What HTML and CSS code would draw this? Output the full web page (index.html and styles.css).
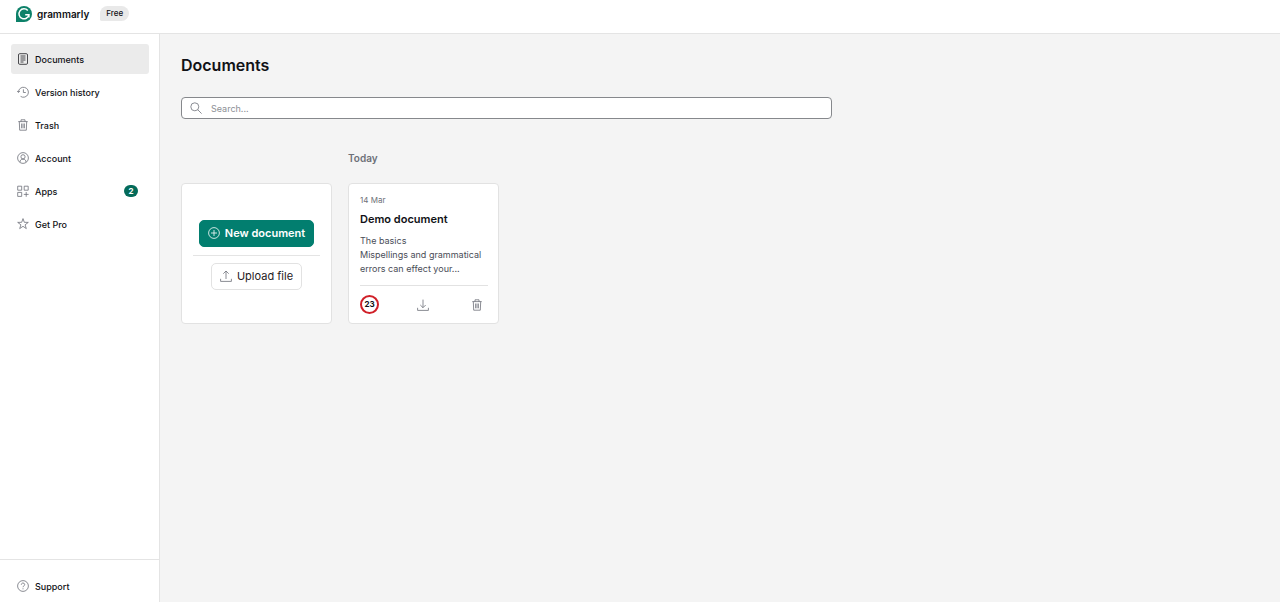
FILE: index.html
```html
<!DOCTYPE html>
<html lang="en">
<head>
  <meta charset="UTF-8" />
  <meta name="viewport" content="width=device-width, initial-scale=1" />
  <title>Documents - Grammarly</title>
  <link rel="stylesheet" href="styles.css">
</head>
<body>

  <header class="topbar">
    <a class="brand" href="#">
      <svg class="logo" viewBox="0 0 16 16">
        <path d="M0 16V8a8 8 0 1 1 8 8z" fill="#0d8169"/>
        <path d="M11.8 4.6A5 5 0 1 0 12.9 8.8H9.2M12.9 8.3v3.2" fill="none" stroke="#fff" stroke-width="1.5"/>
      </svg>
      <span class="brand-name">grammarly</span>
    </a>
    <span class="plan">Free</span>
  </header>

  <div class="layout">
    <aside class="sidebar">
      <nav class="menu">
        <a class="item active" href="#">
          <svg class="icon" viewBox="0 0 12 12"><rect x="1.5" y=".7" width="9" height="10.6" rx="1.2"/><path d="M3.5 3h5M3.5 5h5M3.5 7h5M3.5 9h3"/></svg>
          Documents
        </a>
        <a class="item" href="#">
          <svg class="icon" viewBox="0 0 12 12"><path d="M1.4 6.2A5 5 0 1 1 3.6 10.4M0 4.8l1.4 1.6L3 5M6.4 3.3v3.2h2.4"/></svg>
          Version history
        </a>
        <a class="item" href="#">
          <svg class="icon" viewBox="0 0 12 12"><path d="M1.3 2.6h9.4M4 2.6V.8h4v1.8M2.3 2.6l.4 8.6h6.6l.4-8.6M4.6 4.5v4.8M6 4.5v4.8M7.4 4.5v4.8"/></svg>
          Trash
        </a>
        <a class="item" href="#">
          <svg class="icon" viewBox="0 0 12 12"><circle cx="6" cy="6" r="5.4"/><circle cx="6" cy="4.8" r="2.1"/><path d="M3 10.2c0-2 1-3 3-3s3 1 3 3"/></svg>
          Account
        </a>
        <a class="item" href="#">
          <svg class="icon" viewBox="0 0 12 12"><path d="M.7 1.2h4v4h-4zM7.2 1.2h4v4h-4zM.7 7.4h4v4h-4zM9.2 7v4.8M6.8 9.4h4.8"/></svg>
          Apps
          <span class="count">2</span>
        </a>
        <a class="item" href="#">
          <svg class="icon" viewBox="0 0 12 12"><path d="M6 .6l1.3 3.7 4 .1-3.2 2.4 1.2 3.8L6 8.3l-3.3 2.3 1.2-3.8L.7 4.4l4-.1z"/></svg>
          Get Pro
        </a>
      </nav>
      <div class="sidebar-footer">
        <a class="item" href="#">
          <svg class="icon" viewBox="0 0 12 12"><circle cx="6" cy="6" r="5.4"/><path d="M4.3 4.7c0-2.3 3.5-2.2 3.4 0C7.7 5.9 6 5.8 6 7.2M6 8.3v1"/></svg>
          Support
        </a>
      </div>
    </aside>

    <main class="content">
      <h1>Documents</h1>

      <label class="search">
        <svg class="icon" viewBox="0 0 12 12"><circle cx="4.8" cy="4.8" r="4"/><path d="M7.7 7.7l3.9 3.9"/></svg>
        <input type="search" placeholder="Search..." aria-label="Search documents" />
      </label>

      <div class="documents">
        <h2>Today</h2>

        <section class="card new-card">
          <button type="button" class="btn btn-primary">
            <svg class="icon" viewBox="0 0 12 12"><circle cx="6" cy="6" r="5.4"/><path d="M6 3v6M3 6h6"/></svg>
            New document
          </button>
          <hr>
          <button type="button" class="btn btn-secondary">
            <svg class="icon" viewBox="0 0 12 12"><path d="M6 9V1M3.3 3.7L6 1l2.7 2.7M.6 8.8v2.6h10.8V8.8"/></svg>
            Upload file
          </button>
        </section>

        <article class="card doc-card">
          <time datetime="03-14">14 Mar</time>
          <h3>Demo document</h3>
          <p>The basics<br>Mispellings and grammatical errors can effect your...</p>
          <div class="doc-actions">
            <span class="score">23</span>
            <button type="button" class="icon-btn" aria-label="Download">
              <svg class="icon" viewBox="0 0 12 12"><path d="M6 .6v8M3.3 6L6 8.7 8.7 6M.6 8.8v2.6h10.8V8.8"/></svg>
            </button>
            <button type="button" class="icon-btn" aria-label="Delete">
              <svg class="icon" viewBox="0 0 12 12"><path d="M1.3 2.6h9.4M4 2.6V.8h4v1.8M2.3 2.6l.4 8.6h6.6l.4-8.6M4.6 4.5v4.8M6 4.5v4.8M7.4 4.5v4.8"/></svg>
            </button>
          </div>
        </article>
      </div>
    </main>
  </div>

</body>
</html>
```
FILE: styles.css
```css
* {
  box-sizing: border-box;
}
body {
  margin: 0;
  min-height: 100vh;
  display: flex;
  flex-direction: column;
  font-family: Inter, "Liberation Sans", sans-serif;
  font-size: 9px;
  color: #111216;
  background-color: #fff;
}
h1, h2, h3, p {
  margin: 0;
}
a {
  color: inherit;
  text-decoration: none;
}
button {
  font-family: inherit;
  cursor: pointer;
}
.icon {
  width: 12px;
  height: 12px;
  flex: none;
  fill: none;
  stroke: #6d7078;
  stroke-width: 0.8;
}

/* top bar */
.topbar {
  display: flex;
  align-items: center;
  gap: 11px;
  height: 34px;
  padding: 0 16px 6px;
  border-bottom: 1px solid #e4e4e4;
}
.brand {
  display: flex;
  align-items: center;
  gap: 5px;
}
.logo {
  width: 16px;
  height: 16px;
}
.brand-name {
  font-size: 10px;
  font-weight: 600;
}
.plan {
  padding: 0 6px;
  font-size: 8px;
  font-weight: 500;
  line-height: 15px;
  background-color: #e9e9e9;
  border-radius: 8px 8px 8px 2px;
}

/* sidebar */
.layout {
  flex: 1;
  display: flex;
}
.sidebar {
  flex: none;
  width: 160px;
  display: flex;
  flex-direction: column;
  justify-content: space-between;
  border-right: 1px solid #e4e4e4;
}
.menu {
  display: flex;
  flex-direction: column;
  gap: 3px;
  padding: 10px 10px 10px 11px;
}
.item {
  display: flex;
  align-items: center;
  gap: 6px;
  height: 30px;
  padding: 0 11px 0 6px;
  font-weight: 500;
  border-radius: 3px;
}
.item:hover, .item.active {
  background-color: #ebebeb;
}
.item.active .icon {
  stroke: #1f2024;
}
.count {
  margin-left: auto;
  width: 14px;
  font-size: 8px;
  font-weight: 700;
  line-height: 12px;
  text-align: center;
  color: #fff;
  background-color: #046b5a;
  border-radius: 6px;
}
.sidebar-footer {
  padding: 11px 10px 1px 11px;
  border-top: 1px solid #e4e4e4;
}

/* content */
.content {
  flex: 1;
  padding: 21px;
  background-color: #f4f4f4;
}
h1 {
  font-size: 16px;
  font-weight: 600;
  line-height: 20px;
}
.search {
  display: flex;
  align-items: center;
  gap: 9px;
  max-width: 651px;
  height: 22px;
  margin-top: 22px;
  padding: 0 8px;
  background-color: #fff;
  border: 1px solid #86888c;
  border-radius: 4px;
}
.search input {
  flex: 1;
  padding: 0;
  font-family: inherit;
  font-size: 9px;
  border: none;
  outline: none;
  background: none;
}
.search input::placeholder {
  color: #8d9096;
}
.documents {
  display: grid;
  grid-template-columns: 151px 151px;
  column-gap: 16px;
  margin-top: 32px;
}
h2 {
  grid-column: 2;
  margin-bottom: 18px;
  font-size: 10px;
  font-weight: 600;
  line-height: 14px;
  color: #6d7078;
}
.card {
  min-height: 141px;
  background-color: #fff;
  border: 1px solid #e2e2e2;
  border-radius: 4px;
}
.new-card {
  display: flex;
  flex-direction: column;
  align-items: center;
  justify-content: center;
  padding: 2px 11px 0;
}
.new-card hr {
  width: 100%;
  margin: 8px 0 7px;
  border: none;
  border-top: 1px solid #e4e4e4;
}
.btn {
  display: flex;
  align-items: center;
  gap: 5px;
  height: 27px;
  padding: 0 8px;
  font-size: 11px;
  border-radius: 5px;
}
.btn-primary {
  font-weight: 600;
  color: #fff;
  background-color: #027e6f;
  border: 1px solid #027e6f;
}
.btn-primary .icon {
  stroke: #fff;
}
.btn-secondary {
  color: #1f2024;
  background-color: #fff;
  border: 1px solid #e2e2e2;
}
.doc-card {
  padding: 10px 10px 8px 11px;
}
.doc-card time {
  display: block;
  font-size: 8px;
  line-height: 12px;
  color: #6d7078;
}
h3 {
  margin: 6px 0 8px;
  font-size: 11px;
  font-weight: 600;
  line-height: 14px;
}
.doc-card p {
  font-size: 9px;
  line-height: 14px;
  color: #4a4d57;
}
.doc-actions {
  display: flex;
  align-items: center;
  justify-content: space-between;
  margin-top: 9px;
  padding-top: 9px;
  border-top: 1px solid #e2e2e2;
}
.score {
  width: 19px;
  font-size: 8px;
  font-weight: 700;
  line-height: 15px;
  text-align: center;
  border: 2px solid #d02028;
  border-radius: 50%;
}
.icon-btn {
  display: flex;
  padding: 0 5px;
  background: none;
  border: none;
}
```
